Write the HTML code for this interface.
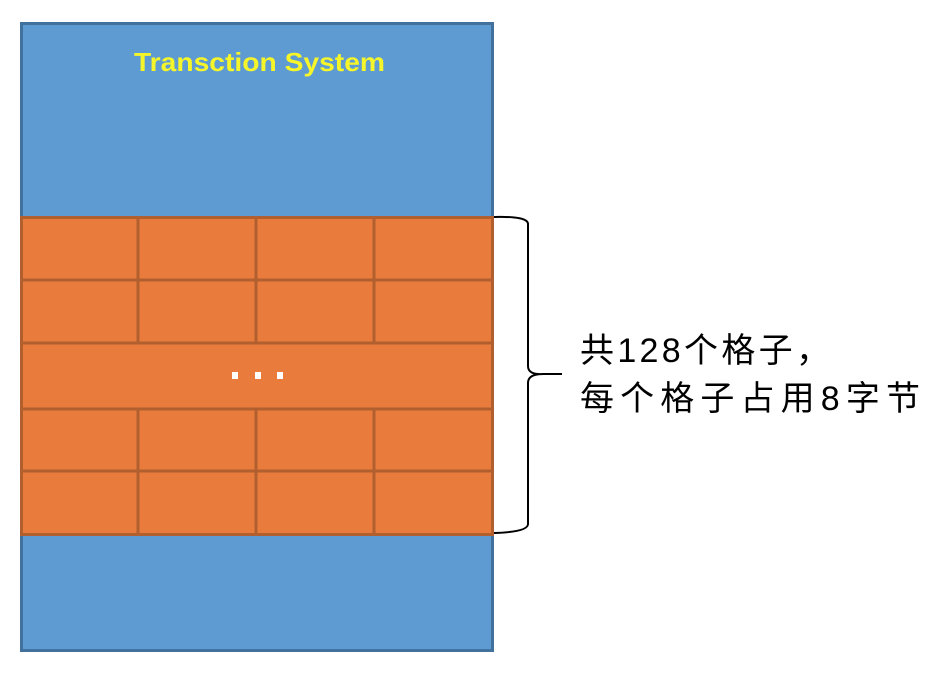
<!DOCTYPE html>
<html><head><meta charset="utf-8"><style>body{margin:0;background:#fff}svg{display:block}</style></head><body>
<svg width="947" height="696" viewBox="0 0 947 696" xmlns="http://www.w3.org/2000/svg">
<rect x="21.5" y="23.5" width="471" height="627" fill="#5e9bd2" stroke="#41719c" stroke-width="3"/>
<text x="134" y="71" font-family="Liberation Sans, sans-serif" font-weight="bold" font-size="26" fill="#f5f52a" textLength="251" lengthAdjust="spacingAndGlyphs">Transction System</text>
<rect x="21.5" y="217.5" width="471" height="317" fill="#e97c3c" stroke="#b15f2f" stroke-width="3"/>
<g stroke="#b15f2f" stroke-width="3">
<line x1="21" y1="280" x2="493" y2="280"/>
<line x1="21" y1="343" x2="493" y2="343"/>
<line x1="21" y1="409" x2="493" y2="409"/>
<line x1="21" y1="471" x2="493" y2="471"/>
<line x1="138" y1="217" x2="138" y2="343"/>
<line x1="256" y1="217" x2="256" y2="343"/>
<line x1="374" y1="217" x2="374" y2="343"/>
<line x1="138" y1="409" x2="138" y2="535"/>
<line x1="256" y1="409" x2="256" y2="535"/>
<line x1="374" y1="409" x2="374" y2="535"/>
</g>
<g fill="#fff"><rect x="232" y="372" width="6" height="7"/><rect x="255" y="372" width="6" height="7"/><rect x="277" y="372" width="6" height="7"/></g>
<path d="M494 217 Q528 216 528 224 L528 366 Q528 375 543 374 L562 374 M543 374 Q528 374 528 383 L528 524 Q528 532 494 533" fill="none" stroke="#000" stroke-width="2"/>
<text x="580" y="362" font-family="Liberation Sans, 'Noto Sans CJK SC', sans-serif" font-size="34" fill="#000" textLength="250">共128个格子，</text>
<text x="580" y="410" font-family="Liberation Sans, 'Noto Sans CJK SC', sans-serif" font-size="34" fill="#000" textLength="340">每个格子占用8字节</text>
</svg>
</body></html>
